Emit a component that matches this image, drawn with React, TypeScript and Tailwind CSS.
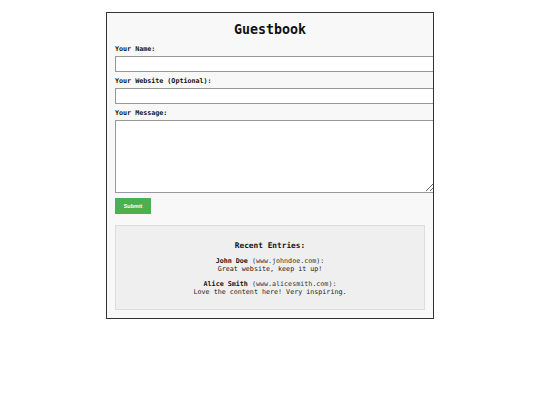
const mono = "font-['DejaVu_Sans_Mono',monospace]";

const entries = [
  { name: "John Doe", site: "www.johndoe.com", message: "Great website, keep it up!" },
  { name: "Alice Smith", site: "www.alicesmith.com", message: "Love the content here! Very inspiring." },
];

function Field({ label, textarea }: { label: string; textarea?: boolean }) {
  return (
    <div className="mt-[4px] first:mt-0">
      <label className="block pt-[1px] text-[6.7px] leading-[8px] font-bold text-[#111]">{label}</label>
      {textarea ? (
        <textarea className="mt-[3px] block h-[73px] w-[calc(100%+10px)] border border-[#999] bg-white" />
      ) : (
        <input type="text" className="mt-[3px] block h-[16px] w-[calc(100%+10px)] border border-[#999] bg-white" />
      )}
    </div>
  );
}

export default function App() {
  return (
    <main className={`min-h-[405px] bg-white pt-[12px] ${mono}`}>
      <div className="mx-auto w-[328px] overflow-hidden border border-[#333] bg-[#f8f8f8] px-2 pt-[9px] pb-[8px]">
        <h2 className="text-center text-[13.3px] leading-[16px] font-bold text-[#111]">Guestbook</h2>

        <form className="mt-[6px]" onSubmit={(e) => e.preventDefault()}>
          <Field label="Your Name:" />
          <Field label="Your Website (Optional):" />
          <Field label="Your Message:" textarea />
          <button
            type="submit"
            className="mt-[5px] block h-[16px] w-[36px] bg-[#4caf50] font-['Liberation_Sans',Arial,sans-serif] text-[5.5px] font-bold text-white"
          >
            Submit
          </button>
        </form>

        {/* entries */}
        <section className="mt-[11px] border border-[#ddd] bg-[#efefef] pt-[15px] pb-[13px] text-center text-[#111]">
          <h3 className="text-[7.8px] leading-[10px] font-bold">Recent Entries:</h3>
          {entries.map((en, i) => (
            <div key={en.name} className={`${i === 0 ? "mt-[6px]" : "mt-[7px]"} text-[6.7px] leading-[8px]`}>
              <div>
                <strong>{en.name}</strong> <span className="text-[#333]">({en.site}):</span>
              </div>
              <div className="text-[#222]">{en.message}</div>
            </div>
          ))}
        </section>
      </div>
    </main>
  );
}
